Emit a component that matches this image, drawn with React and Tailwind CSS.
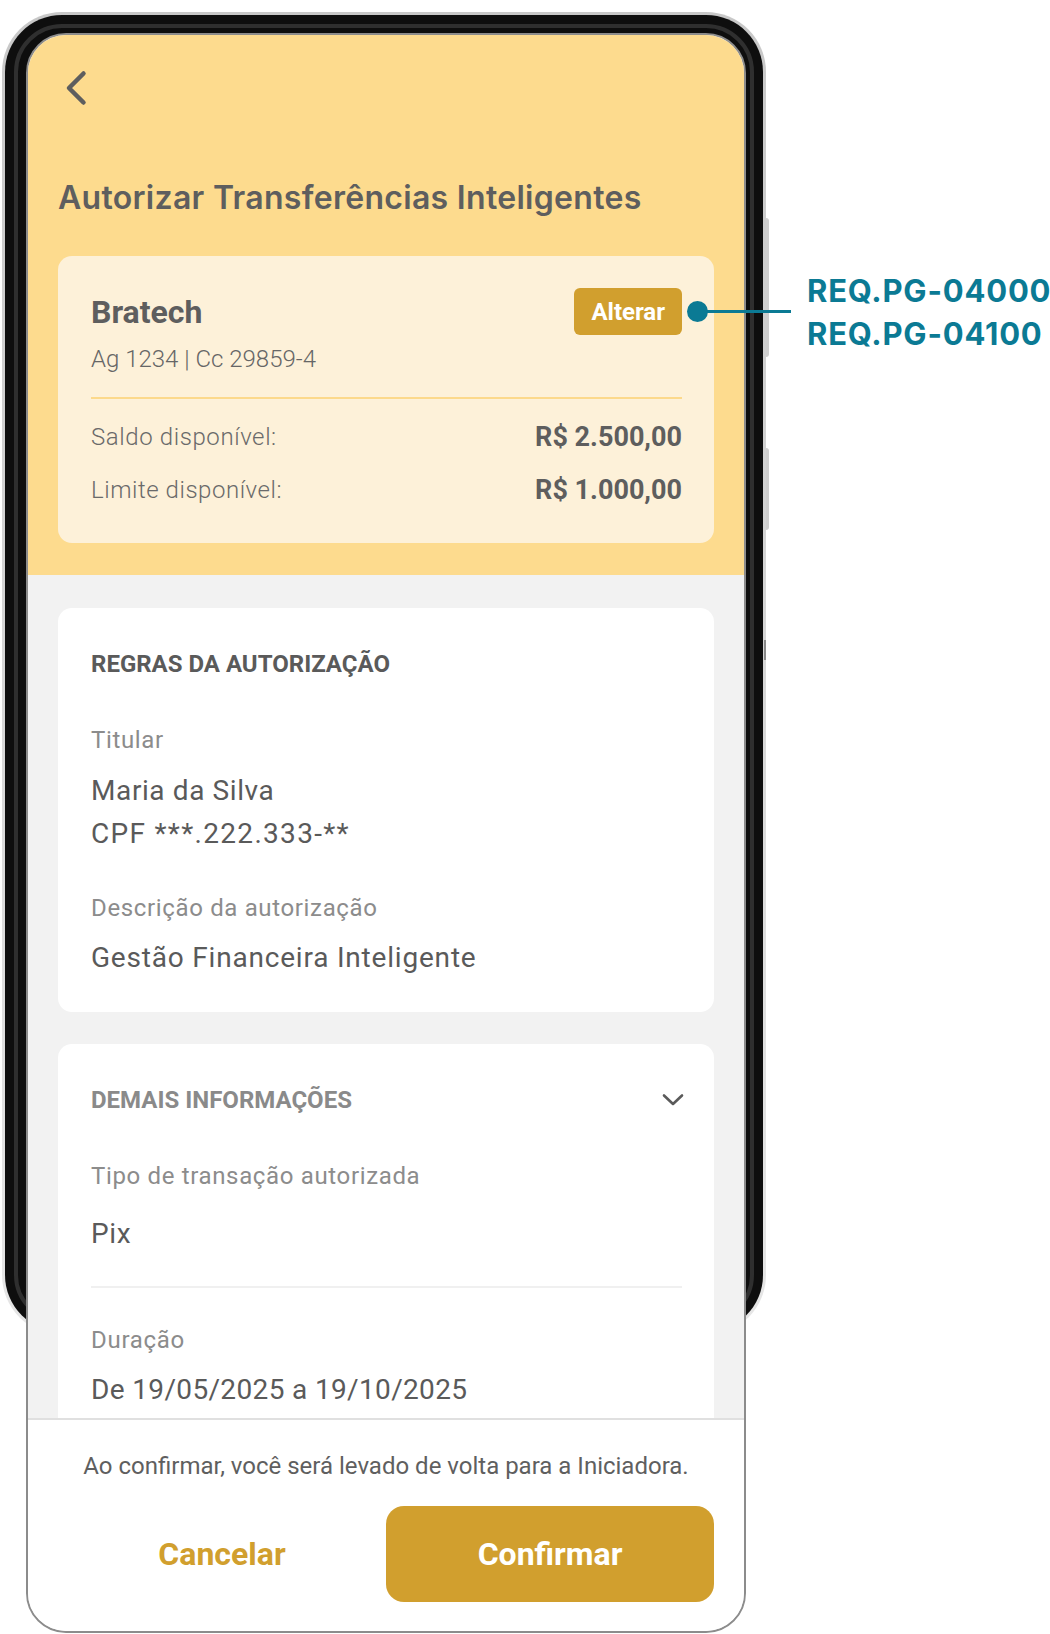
import React from 'react';

const gold = '#d19f2e';

function Field({ label, children, first, valueGap = 'mt-[15px]' }) {
  return (
    <div className={first ? 'mt-[48px]' : 'mt-[39px]'}>
      <p className="text-[24px] leading-[28px] tracking-[0.65px] text-[#8c8c8c]">{label}</p>
      <div className={`${valueGap} text-[28px] leading-[43px] tracking-[0.6px] text-[#5a5a5a]`}>{children}</div>
    </div>
  );
}

export default function App() {
  return (
    <div
      className="relative w-[1050px] h-[1634px] overflow-hidden bg-white"
      style={{ fontFamily: 'Roboto, "Noto Sans", sans-serif' }}
    >
      {/* device frame behind the screen */}
      <div className="absolute left-[763px] top-[218px] w-[6px] h-[139px] rounded-r-[3px] bg-[#cfcfcf]" />
      <div className="absolute left-[763px] top-[448px] w-[6px] h-[82px] rounded-r-[3px] bg-[#cfcfcf]" />
      <div className="absolute left-[2px] top-[12px] w-[764px] h-[1323px] rounded-[60px] bg-gradient-to-b from-[#c8c8c8] to-[#e6e6e6] p-[3px]">
        <div className="h-full rounded-[57px] bg-[#0e0e0e] p-[9px]">
          <div className="h-full rounded-[48px] border-[4px] border-[#2f2f2f]" />
        </div>
      </div>
      <div className="absolute left-[764px] top-[640px] w-[2px] h-[20px] bg-[#8a8a8a]" />

      {/* screen */}
      <div className="relative z-10 ml-[26px] mt-[33px] w-[720px] h-[1600px] rounded-[40px] border-2 border-[#8c8c8c] overflow-hidden flex flex-col bg-[#f2f2f2]">
        <div className="bg-[#fddb8e] px-[30px] pt-[33px] pb-[32px]">
          <svg width="28" height="40" viewBox="0 0 28 40" className="ml-[4px]" fill="none">
            <path d="M21.5 5.5 L7 20 L21.5 34.5" stroke="#5e5e5e" strokeWidth="4.5" strokeLinecap="round" strokeLinejoin="round" />
          </svg>
          <h1
            className="mt-[70px] text-[32px] leading-[40px] font-semibold tracking-[0.3px] text-[#5e5e5e]"
            style={{ fontFamily: 'Inter, Roboto, sans-serif' }}
          >
            Autorizar Transferências Inteligentes
          </h1>
          <div className="mt-[38px] rounded-[14px] bg-[#fdf1d9] pl-[33px] pr-[32px] pt-[32px] pb-[37px]">
            <div className="flex h-[47px] items-center justify-between">
              <span className="text-[32px] leading-[40px] font-bold text-[#5e5e5e]">Bratech</span>
              <button className="h-[47px] rounded-[6px] px-[17px] text-[24px] font-bold text-white" style={{ backgroundColor: gold }}>
                Alterar
              </button>
            </div>
            <p className="mt-[8px] text-[24px] leading-[32px] font-light text-[#666]">Ag 1234 | Cc 29859-4</p>
            <div className="mt-[22px] h-[2px] bg-[#fcd98b]" />
            <div className="mt-[22px] flex items-center justify-between leading-[32px]">
              <span className="text-[24px] font-light tracking-[0.6px] text-[#6a6a6a]">Saldo disponível:</span>
              <span className="text-[27px] font-bold text-[#5e5e5e]">R$ 2.500,00</span>
            </div>
            <div className="mt-[21px] flex items-center justify-between leading-[32px]">
              <span className="text-[24px] font-light tracking-[0.55px] text-[#6a6a6a]">Limite disponível:</span>
              <span className="text-[27px] font-bold text-[#5e5e5e]">R$ 1.000,00</span>
            </div>
          </div>
        </div>

        <div className="flex-1 overflow-hidden px-[30px] pt-[33px]">
          <div className="rounded-[14px] bg-white pl-[33px] pr-[32px] pt-[42px] pb-[33px]">
            <h2 className="text-[24px] leading-[28px] font-bold text-[#5a5a5a]">REGRAS DA AUTORIZAÇÃO</h2>
            <Field label="Titular" first>
              <p>Maria da Silva</p>
              <p className="tracking-[1.3px]">CPF ***.222.333-**</p>
            </Field>
            <Field label="Descrição da autorização" valueGap="mt-[14px]">
              <p className="tracking-[0.8px]">Gestão Financeira Inteligente</p>
            </Field>
          </div>

          <div className="mt-[32px] rounded-[14px] bg-white pl-[33px] pr-[32px] pt-[42px] pb-[40px]">
            <div className="flex items-center justify-between">
              <h2 className="text-[24px] leading-[28px] font-bold text-[#8a8a8a]">DEMAIS INFORMAÇÕES</h2>
              <svg width="24" height="14" viewBox="0 0 24 14" fill="none" className="mr-[-3px]">
                <path d="M3 2.5 L12 11 L21 2.5" stroke="#5a5a5a" strokeWidth="2.6" strokeLinecap="round" strokeLinejoin="round" />
              </svg>
            </div>
            <Field label="Tipo de transação autorizada" first valueGap="mt-[22px]">
              <p>Pix</p>
            </Field>
            <div className="mt-[31px] h-[2px] bg-[#f0f0f0]" />
            <div className="mt-[38px]">
              <p className="text-[24px] leading-[28px] tracking-[0.7px] text-[#8c8c8c]">Duração</p>
              <p className="mt-[14px] text-[28px] leading-[43px] tracking-[0.35px] text-[#5a5a5a]">De 19/05/2025 a 19/10/2025</p>
            </div>
            <div className="mt-[31px] h-[2px] bg-[#f0f0f0]" />
          </div>
        </div>

        <div className="border-t-2 border-[#e0e0e0] bg-white px-[30px] pt-[32px] pb-[29px]">
          <p className="text-center text-[24px] leading-[28px] text-[#5f5f5f]">
            Ao confirmar, você será levado de volta para a Iniciadora.
          </p>
          <div className="mt-[26px] grid h-[96px] grid-cols-2">
            <button className="text-[32px] font-bold" style={{ color: gold }}>Cancelar</button>
            <button className="rounded-[18px] text-[32px] font-bold text-white" style={{ backgroundColor: gold }}>
              Confirmar
            </button>
          </div>
        </div>
      </div>

      {/* requirement annotation */}
      <div className="absolute left-[697px] top-[310px] z-20 h-[3px] w-[94px] bg-[#0b7a94]" />
      <div className="absolute left-[687px] top-[301px] z-20 h-[21px] w-[21px] rounded-full bg-[#0b7a94]" />
      <div
        className="absolute left-[807px] top-[269px] z-20 whitespace-nowrap text-[31px] leading-[43px] font-bold tracking-[0.8px] text-[#0b7a94]"
        style={{ fontFamily: 'Inter, sans-serif' }}
      >
        <p>REQ.PG-04000</p>
        <p>REQ.PG-04100</p>
      </div>
    </div>
  );
}
